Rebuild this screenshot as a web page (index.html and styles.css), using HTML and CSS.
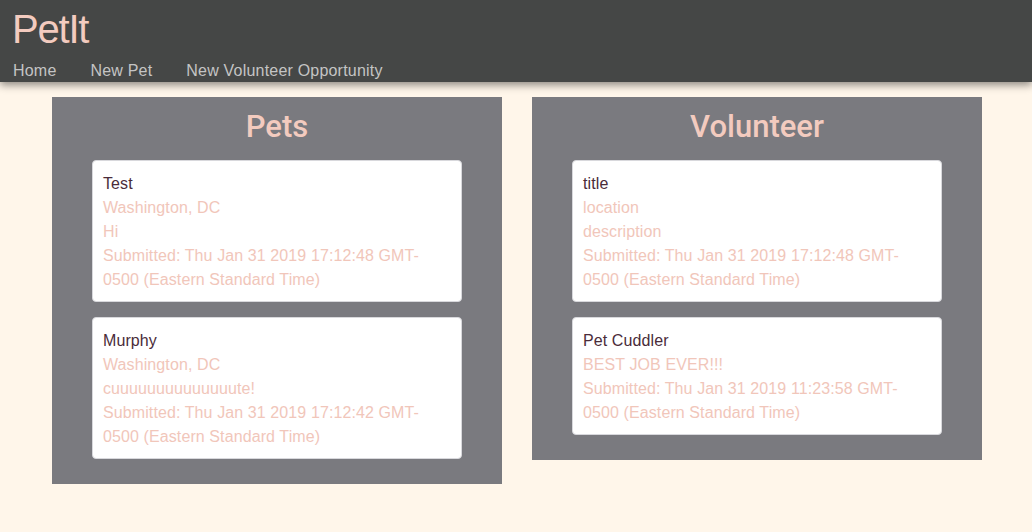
FILE: index.html
```html
<!DOCTYPE html>
<html>
<head>
<meta charset="utf-8">
<link rel="stylesheet" href="styles.css">
</head>
<body>
<header class="topbar">
  <h1 class="brand">PetIt</h1>
  <nav class="nav">
    <a class="nav-link" href="#">Home</a>
    <a class="nav-link" href="#">New Pet</a>
    <a class="nav-link" href="#">New Volunteer Opportunity</a>
  </nav>
</header>
<main class="board">
  <section class="panel">
    <h2 class="panel-title">Pets</h2>
    <div class="card">
      <div class="card-name">Test</div>
      <div class="card-line">Washington, DC</div>
      <div class="card-line">Hi</div>
      <div class="card-line">Submitted: Thu Jan 31 2019 17:12:48 GMT-0500 (Eastern Standard Time)</div>
    </div>
    <div class="card">
      <div class="card-name">Murphy</div>
      <div class="card-line">Washington, DC</div>
      <div class="card-line">cuuuuuuuuuuuuuute!</div>
      <div class="card-line">Submitted: Thu Jan 31 2019 17:12:42 GMT-0500 (Eastern Standard Time)</div>
    </div>
  </section>
  <section class="panel">
    <h2 class="panel-title">Volunteer</h2>
    <div class="card">
      <div class="card-name">title</div>
      <div class="card-line">location</div>
      <div class="card-line">description</div>
      <div class="card-line">Submitted: Thu Jan 31 2019 17:12:48 GMT-0500 (Eastern Standard Time)</div>
    </div>
    <div class="card">
      <div class="card-name">Pet Cuddler</div>
      <div class="card-line">BEST JOB EVER!!!</div>
      <div class="card-line">Submitted: Thu Jan 31 2019 11:23:58 GMT-0500 (Eastern Standard Time)</div>
    </div>
  </section>
</main>
</body>
</html>
```

FILE: styles.css
```css
* { box-sizing: border-box; }

html, body {
  margin: 0;
  padding: 0;
}

body {
  background: #fff6ea;
  font-family: "Liberation Sans", Arial, sans-serif;
  font-size: 16px;
  line-height: 24px;
  letter-spacing: 0.1px;
  height: 532px;
  overflow: hidden;
}

.topbar {
  background: #454746;
  height: 82px;
  padding: 5px 12px 0 12px;
  box-shadow: 0 3px 8px rgba(0, 0, 0, 0.45);
  position: relative;
  z-index: 1;
}

.brand {
  margin: 0;
  font-size: 40px;
  line-height: 48px;
  font-weight: 400;
  letter-spacing: -1.2px;
  color: #f3cbbf;
}

.nav {
  display: flex;
  gap: 34px;
  margin-top: 6px;
  padding-left: 1px;
}

.nav-link {
  color: #c4c4c4;
  text-decoration: none;
  font-size: 16px;
  line-height: 24px;
  letter-spacing: 0.2px;
}

.board {
  display: flex;
  align-items: flex-start;
  gap: 30px;
  padding: 15px 50px 0 52px;
}

.panel {
  width: 450px;
  background: #7a7a7f;
  padding: 11px 40px 25px 40px;
}

.panel-title {
  margin: 0 0 14px 0;
  text-align: center;
  font-family: Roboto, "Liberation Sans", sans-serif;
  font-size: 31px;
  line-height: 38px;
  font-weight: 500;
  letter-spacing: 0;
  color: #f3cbbf;
}

.card {
  background: #ffffff;
  border: 1px solid #d8d8dc;
  border-radius: 4px;
  padding: 11px 14px 9px 10px;
  margin-bottom: 15px;
}

.card:last-child {
  margin-bottom: 0;
}

.card-name {
  color: #4a2c3a;
}

.card-line {
  color: #f1c6ba;
}
```
